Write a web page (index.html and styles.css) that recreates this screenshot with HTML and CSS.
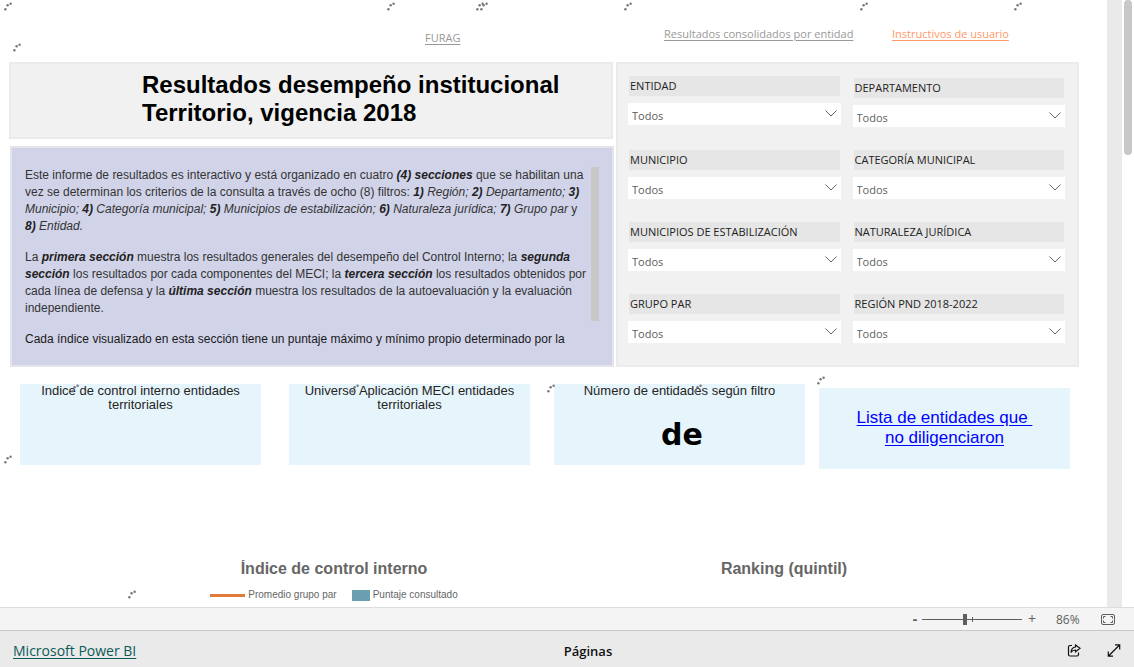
FILE: index.html
```html
<!DOCTYPE html>
<html lang="es">
<head>
<meta charset="utf-8">
<meta name="viewport" content="width=device-width, initial-scale=1">
<title>Resultados desempeño institucional</title>
<link rel="stylesheet" href="styles.css">
</head>
<body>
<div class="viewport">
  <main class="canvas">
    <nav class="links">
      <a class="link link-furag" href="#furag">FURAG</a>
      <a class="link" href="#resultados">Resultados consolidados por entidad</a>
      <a class="link link-accent" href="#instructivos">Instructivos de usuario</a>
    </nav>

    <div class="overview">
      <div class="summary">
        <h1 class="title">Resultados desempeño institucional<br>Territorio, vigencia 2018</h1>
        <section class="intro">
          <div class="intro-text">
            <p>Este informe de resultados es interactivo y está organizado en cuatro <b><i>(4) secciones</i></b> que se habilitan una<br>vez se determinan los criterios de la consulta a través de ocho (8) filtros: <i><b>1)</b> Región; <b>2)</b> Departamento; <b>3)</b><br>Municipio; <b>4)</b> Categoría municipal; <b>5)</b> Municipios de estabilización; <b>6)</b> Naturaleza jurídica; <b>7)</b> Grupo par</i> y<br><i><b>8)</b> Entidad.</i></p>
            <p>La <b><i>primera sección</i></b> muestra los resultados generales del desempeño del Control Interno; la <b><i>segunda<br>sección</i></b> los resultados por cada componentes del MECI; la <b><i>tercera sección</i></b> los resultados obtenidos por<br>cada línea de defensa y la <b><i>última sección</i></b> muestra los resultados de la autoevaluación y la evaluación<br>independiente.</p>
            <p class="strong-ink">Cada índice visualizado en esta sección tiene un puntaje máximo y mínimo propio determinado por la</p>
          </div>
          <div class="intro-thumb"></div>
        </section>
      </div>

      <form class="filters">
        <div class="filter-col filter-col-first">
          <div class="filter"><label for="entidad">ENTIDAD</label><span class="pick"><select id="entidad"><option>Todos</option></select><svg viewBox="0 0 12 7"><path d="M.5.5 6 6 11.5.5"/></svg></span></div>
          <div class="filter"><label for="municipio">MUNICIPIO</label><span class="pick"><select id="municipio"><option>Todos</option></select><svg viewBox="0 0 12 7"><path d="M.5.5 6 6 11.5.5"/></svg></span></div>
          <div class="filter"><label for="estabilizacion">MUNICIPIOS DE ESTABILIZACIÓN</label><span class="pick"><select id="estabilizacion"><option>Todos</option></select><svg viewBox="0 0 12 7"><path d="M.5.5 6 6 11.5.5"/></svg></span></div>
          <div class="filter"><label for="grupo">GRUPO PAR</label><span class="pick"><select id="grupo"><option>Todos</option></select><svg viewBox="0 0 12 7"><path d="M.5.5 6 6 11.5.5"/></svg></span></div>
        </div>
        <div class="filter-col">
          <div class="filter"><label for="departamento">DEPARTAMENTO</label><span class="pick"><select id="departamento"><option>Todos</option></select><svg viewBox="0 0 12 7"><path d="M.5.5 6 6 11.5.5"/></svg></span></div>
          <div class="filter"><label for="categoria">CATEGORÍA MUNICIPAL</label><span class="pick"><select id="categoria"><option>Todos</option></select><svg viewBox="0 0 12 7"><path d="M.5.5 6 6 11.5.5"/></svg></span></div>
          <div class="filter"><label for="naturaleza">NATURALEZA JURÍDICA</label><span class="pick"><select id="naturaleza"><option>Todos</option></select><svg viewBox="0 0 12 7"><path d="M.5.5 6 6 11.5.5"/></svg></span></div>
          <div class="filter"><label for="region">REGIÓN PND 2018-2022</label><span class="pick"><select id="region"><option>Todos</option></select><svg viewBox="0 0 12 7"><path d="M.5.5 6 6 11.5.5"/></svg></span></div>
        </div>
      </form>
    </div>

    <div class="cards">
      <section class="card"><h2>Indice de control interno entidades<br>territoriales</h2></section>
      <section class="card"><h2>Universo Aplicación MECI entidades<br>territoriales</h2></section>
      <section class="card"><h2>Número de entidades según filtro</h2><p class="figure">de</p></section>
      <section class="card card-link"><a href="#lista">Lista de entidades que&nbsp;<br>no diligenciaron</a></section>
    </div>

    <div class="charts">
      <section class="chart">
        <h2>Índice de control interno</h2>
        <ul class="legend">
          <li><span class="key-line"></span>Promedio grupo par</li>
          <li><span class="key-box"></span>Puntaje consultado</li>
        </ul>
      </section>
      <section class="chart"><h2>Ranking (quintil)</h2></section>
    </div>

    <svg class="spinners" aria-hidden="true">
      <defs>
        <g id="spin"><circle cx="1.4" cy="7.2" r="1.2"/><circle cx="3.6" cy="3.2" r="1.2"/><circle cx="6.6" cy="1.8" r="1.2"/></g>
      </defs>
      <use href="#spin" x="4" y="2"/><use href="#spin" x="13" y="43"/><use href="#spin" x="387" y="2"/>
      <use href="#spin" x="476" y="2"/><use href="#spin" x="480" y="2"/><use href="#spin" x="624" y="2"/>
      <use href="#spin" x="860" y="2"/><use href="#spin" x="1014" y="2"/><use href="#spin" x="4" y="455"/>
      <use href="#spin" x="71" y="384"/><use href="#spin" x="351" y="384"/><use href="#spin" x="547" y="384"/>
      <use href="#spin" x="694" y="384"/><use href="#spin" x="817" y="376"/><use href="#spin" x="128" y="590"/>
    </svg>
  </main>
  <div class="gutter"></div>
  <div class="scrollbar"><div class="scroll-thumb"></div></div>
</div>

<div class="zoombar">
  <button type="button" class="zoom-step zoom-out" aria-label="Alejar">-</button>
  <span class="zoom-range"><input type="range" min="0" max="100" value="43" aria-label="Zoom"><span class="zoom-tick"></span></span>
  <button type="button" class="zoom-step" aria-label="Acercar">+</button>
  <span class="zoom-value">86%</span>
  <button type="button" class="icon-button" aria-label="Ajustar a la página"><svg width="14" height="11" viewBox="0 0 14 11"><rect x=".5" y=".5" width="13" height="10" rx="1.5"/><path d="M4.500 2.500h-2v2M2.500 6.500v2h2M9.500 2.500h2v2M11.500 6.500v2h-2"/></svg></button>
</div>

<footer class="footer">
  <a class="brand" href="#powerbi">Microsoft Power BI</a>
  <span class="pages">Páginas</span>
  <div class="actions">
    <button type="button" class="icon-button dark" aria-label="Compartir"><svg width="14" height="13" viewBox="0 0 14 13"><path d="M5 1.500H3A1.500 1.500 0 0 0 1.500 3v7.500A1.500 1.500 0 0 0 3 12h7a1.500 1.500 0 0 0 1.500-1.500V8.500M8.500 1 13 4.300 8.500 7.800V6C6.500 6 5 6.800 4 8.500 4.200 5.500 5.500 3.300 8.500 3z"/></svg></button>
    <button type="button" class="icon-button dark" aria-label="Pantalla completa"><svg width="14" height="13" viewBox="0 0 14 13"><path d="M1.500 12 12.500 1M8 .8h4.700v4.700M1.300 7.500v4.700H6"/></svg></button>
  </div>
</footer>
</body>
</html>
```
FILE: styles.css
```css
* { box-sizing: border-box; }

body {
  margin: 0;
  height: 100vh;
  display: flex;
  flex-direction: column;
  font-family: "Liberation Sans", Arial, sans-serif;
  font-size: 12px;
  color: #252423;
  background: #fff;
}

h1, h2, p, ul { margin: 0; padding: 0; }

.viewport { flex: 1; min-height: 0; display: flex; overflow: hidden; }
.canvas { position: relative; flex: 1; min-width: 0; overflow: hidden; }
.gutter { width: 15px; background: #eaeaea; }
.scrollbar { width: 12px; padding: 0 2px; }
.scroll-thumb { height: 155px; border-radius: 4px; background: #c8c8c8; }

.links {
  display: grid;
  grid-template-columns: 239fr 228fr 215fr;
  padding: 26px 0 0 425px;
  height: 62px;
  align-items: start;
  font-family: "Open Sans", "Segoe UI", sans-serif;
  line-height: 16px;
}
.link { justify-self: start; color: #999; font-size: 11px; white-space: nowrap; text-underline-offset: 2px; }
.link-furag { margin-top: 4px; }
.link-accent { color: #ff9966; }

.overview {
  display: grid;
  grid-template-columns: 605fr 463fr;
  gap: 2px;
  padding: 0 28px 0 9px;
}
.summary { display: flex; flex-direction: column; gap: 7px; min-width: 0; }
.title {
  padding: 7px 0 10px 131px;
  margin-right: 1px;
  border: 2px solid #ebebeb;
  background: #f1f1f1;
  color: #000;
  font-size: 24px;
  line-height: 28px;
  white-space: nowrap;
}
.intro {
  flex: 1;
  display: flex;
  margin-left: 1px;
  padding: 19px 13px 14px 13px;
  border: 2px solid #e4e4ea;
  background: #d1d3e9;
}
.intro-text { flex: 1; min-width: 0; line-height: 17px; white-space: nowrap; color: #333; }
.intro-text p + p { margin-top: 14px; }
.intro-text b { color: #222; }
.intro-text .strong-ink { color: #1a1a1a; }
.intro-thumb { width: 8px; height: 154px; background: #c8c8c8; }

.filters {
  display: grid;
  grid-template-columns: 1fr 1fr;
  gap: 12px;
  padding: 12px 12px 22px 10px;
  border: 2px solid #ebebeb;
  background: #f1f1f1;
  font-family: "Open Sans", "Segoe UI", sans-serif;
}
.filter-col { display: flex; flex-direction: column; gap: 23px; padding-top: 2px; }
.filter-col-first { padding-top: 0; }
.filter-col-first .filter:first-child { margin-bottom: 2px; }
.filter { display: flex; flex-direction: column; gap: 7px; }
.filter label {
  margin: 0 1px;
  padding-left: 1px;
  height: 20px;
  line-height: 20px;
  background: #e6e6e6;
  color: #222;
  font-size: 11px;
}
.pick { position: relative; display: flex; }
.pick select {
  appearance: none;
  width: 100%;
  height: 22px;
  padding: 3px 20px 0 4px;
  border: 0;
  border-radius: 0;
  background: #fff;
  color: #605e5c;
  font: 11px/19px "Open Sans", "Segoe UI", sans-serif;
}
.pick svg {
  position: absolute;
  top: 7px;
  right: 4px;
  width: 12px;
  height: 7px;
  fill: none;
  stroke: #666;
  pointer-events: none;
}

.cards {
  display: grid;
  grid-template-columns: 241fr 28fr 241fr 24fr 251fr 14fr 251fr;
  padding: 17px 37px 0 20px;
}
.card { height: 81px; background: #e6f5fb; text-align: center; }
.card:nth-child(2) { grid-column: 3; }
.card:nth-child(3) { grid-column: 5; }
.card:nth-child(4) { grid-column: 7; }
.card h2 { font-size: 13px; font-weight: 400; line-height: 14px; }
.figure { color: #000; font: bold 30px/36px "DejaVu Sans", sans-serif; padding: 19px 0 0 5px; }
.card-link { margin-top: 4px; padding-top: 20px; font-size: 17px; line-height: 20px; }
.card-link a { color: #0000ff; text-underline-offset: 2px; }

.charts { display: grid; grid-template-columns: 450fr 450fr; padding: 91px 98px 0 109px; }
.chart { text-align: center; color: #666; }
.chart h2 { height: 18px; line-height: 18px; font-size: 16px; overflow: hidden; }
.legend { display: flex; justify-content: center; gap: 15px; margin-top: 10px; list-style: none; font-size: 10px; line-height: 14px; white-space: nowrap; }
.legend li { display: flex; align-items: center; gap: 3px; }
.key-line { width: 35px; height: 3px; background: #e07b39; }
.key-box { width: 18px; height: 11px; background: #6a9fb0; }

.spinners { position: absolute; inset: 0; width: 100%; height: 100%; fill: #777; pointer-events: none; }

button { padding: 0; border: 0; background: none; font: inherit; color: inherit; }
.zoombar {
  display: flex;
  align-items: center;
  height: 23px;
  padding-right: 19px;
  border-top: 1px solid #ddd;
  background: #f4f4f4;
  color: #605e5c;
  font-family: "Open Sans", "Segoe UI", sans-serif;
  justify-content: flex-end;
}
.zoom-step { width: 20px; font-size: 14px; line-height: 20px; }
.zoom-out { width: 14px; font-weight: 700; }
.zoom-range { position: relative; display: flex; width: 100px; }
.zoom-range input { appearance: none; width: 100%; height: 11px; margin: 0; background: linear-gradient(#605e5c, #605e5c) center / 100% 1px no-repeat; }
.zoom-range input::-webkit-slider-thumb { appearance: none; width: 4px; height: 11px; border: 0; border-radius: 0; background: #605e5c; }
.zoom-tick { position: absolute; left: 50%; top: 3px; width: 1px; height: 5px; background: #605e5c; }
.zoom-value { width: 47px; padding-left: 14px; margin-right: 12px; }
.icon-button { display: flex; }
.icon-button svg { fill: none; stroke: #605e5c; }
.dark svg { stroke: #111; stroke-width: 1.2; }

.footer {
  display: grid;
  grid-template-columns: 1fr auto 1fr;
  align-items: center;
  height: 37px;
  padding: 3px 13px 0;
  border-top: 1px solid #c8c8c8;
  background: #eaeaea;
  font-family: "Open Sans", "Segoe UI", sans-serif;
}
.brand { justify-self: start; color: #0b5a58; font-size: 14px; text-underline-offset: 2px; }
.pages { color: #111; font-size: 13px; font-weight: 600; margin-left: 42px; }
.actions { display: flex; justify-content: flex-end; gap: 26px; }
```
